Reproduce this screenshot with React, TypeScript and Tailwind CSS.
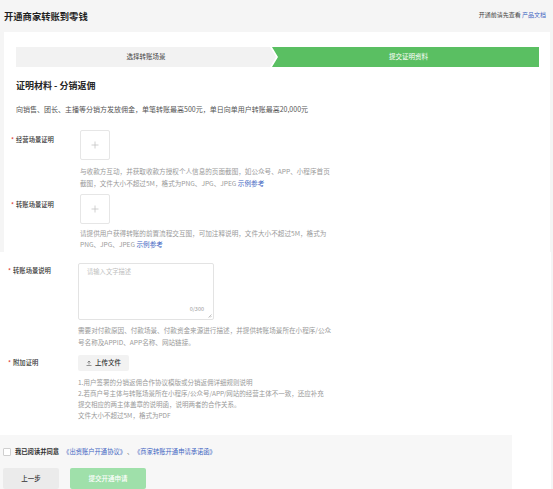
import React from 'react';

const font = { fontFamily: '"Noto Sans CJK SC", "Noto Sans", sans-serif' };

function Star() {
  return <span className="text-[#e0463c] mr-[2px]">*</span>;
}

function UploadBox() {
  return (
    <div className="w-[30px] h-[30px] border border-[#e6e6e6] rounded-[2px] bg-white flex items-center justify-center">
      <svg width="8" height="8" viewBox="0 0 8 8">
        <path d="M4 0.5v7M0.5 4h7" stroke="#c4c4c4" strokeWidth="0.8" />
      </svg>
    </div>
  );
}

function Link({ children }: { children: React.ReactNode }) {
  return <span className="text-[#3f66c2]">{children}</span>;
}

export default function App() {
  return (
    <div className="w-[553px] h-[489px] bg-[#f5f5f5] overflow-hidden text-[#333]" style={font}>
      {/* header */}
      <div className="h-[32px] flex items-center justify-between pl-[4px] pr-[7px]">
        <h1 className="text-[9.3px] leading-[12px] font-bold text-[#1f1f1f] -mt-[1px]">开通商家转账到零钱</h1>
        <div className="text-[6px] leading-[8px] text-[#444] -mt-[2px]">
          开通前请先查看 <Link>产品文档</Link>
        </div>
      </div>

      {/* top card */}
      <div className="ml-[4px] w-[546px] h-[220px] bg-white pt-[15px] pl-[12px]">
        <div className="flex h-[20px] w-[523px]">
          <div className="w-[260px] h-full bg-[#f2f2f2] flex items-center justify-center text-[6.5px] text-[#444] [clip-path:polygon(0_0,254px_0,260px_50%,254px_100%,0_100%)]">
            选择转账场景
          </div>
          <div className="-ml-[4px] flex-1 h-full bg-[#5abf62] flex items-center justify-center text-[6.5px] text-white pl-[6px] [clip-path:polygon(0_0,100%_0,100%_100%,0_100%,6px_50%)]">
            提交证明资料
          </div>
        </div>

        <h2 className="mt-[13px] text-[9px] leading-[12px] font-semibold text-[#262626]">证明材料 - 分销返佣</h2>
        <p className="mt-[12px] text-[7px] leading-[10px] text-[#555]">
          向销售、团长、主播等分销方发放佣金，单笔转账最高500元，单日向单用户转账最高20,000元
        </p>

        {/* row 1 */}
        <div className="flex mt-[16px] -ml-[5px]">
          <div className="w-[69px] pt-[6px] text-[6.3px] leading-[8px] font-medium text-[#333]">
            <Star />经营场景证明
          </div>
          <div>
            <UploadBox />
            <div className="mt-[5px] text-[6.6px] leading-[12px] text-[#9a9a9a] whitespace-nowrap">
              与收款方互动，并获取收款方授权个人信息的页面截图，如公众号、APP、小程序首页
              <br />
              截图，文件大小不超过5M，格式为PNG、JPG、JPEG <Link>示例参考</Link>
            </div>
          </div>
        </div>

        {/* row 2 */}
        <div className="flex mt-[5px] -ml-[5px]">
          <div className="w-[69px] pt-[7px] text-[6.3px] leading-[8px] font-medium text-[#333]">
            <Star />转账场景证明
          </div>
          <div>
            <UploadBox />
            <div className="mt-[4px] text-[6.6px] leading-[11px] text-[#9a9a9a] whitespace-nowrap">
              请提供用户获得转账的前置流程交互图，可加注释说明，文件大小不超过5M，格式为
              <br />
              PNG、JPG、JPEG <Link>示例参考</Link>
            </div>
          </div>
        </div>
      </div>

      {/* lower section */}
      <div className="w-[551px] h-[237px] bg-white">
        <div className="h-[183px] pl-[8px] pt-[11px]">
          {/* row 3 */}
          <div className="flex">
            <div className="w-[70px] pt-[4px] text-[6.3px] leading-[8px] font-medium text-[#333]">
              <Star />转账场景说明
            </div>
            <div>
              <div className="relative w-[136px] h-[57px] border border-[#e3e3e3] rounded-[2px] bg-white">
                <div className="absolute left-[8px] top-[4px] text-[6.3px] leading-[8px] text-[#c0c0c0]">请输入文字描述</div>
                <div className="absolute right-[9px] bottom-[6px] text-[5.5px] leading-[7px] text-[#9a9a9a]">0/300</div>
                <svg className="absolute right-[1px] bottom-[1px]" width="4" height="4" viewBox="0 0 4 4">
                  <path d="M0.5 3.5L3.5 0.5M2 3.5L3.5 2" stroke="#888" strokeWidth="0.5" />
                </svg>
              </div>
              <div className="mt-[4px] text-[6.6px] leading-[12px] text-[#9a9a9a] whitespace-nowrap">
                需要对付款原因、付款场景、付款资金来源进行描述，并提供转账场景所在小程序/公众
                <br />
                号名称及APPID、APP名称、网站链接。
              </div>
            </div>
          </div>

          {/* row 4 */}
          <div className="flex mt-[7px]">
            <div className="w-[70px] pt-[4px] text-[6.3px] leading-[8px] font-medium text-[#333]">
              <Star />附加证明
            </div>
            <div>
              <div className="w-[51px] h-[16px] bg-[#f2f2f2] rounded-[2px] flex items-center justify-center gap-[3px] text-[6.5px] font-medium text-[#333]">
                <svg width="6" height="6" viewBox="0 0 6 6">
                  <path d="M0.5 5.5h5M3 4.5V1M1.5 2.5L3 1l1.5 1.5" stroke="#555" strokeWidth="0.6" fill="none" />
                </svg>
                上传文件
              </div>
              <div className="mt-[6px] text-[6.5px] leading-[11px] text-[#9a9a9a] whitespace-nowrap">
                1.用户签署的分销返佣合作协议模版或分销返佣详细规则说明
                <br />
                2.若商户号主体与转账场景所在小程序/公众号/APP/网站的经营主体不一致，还应补充
                <br />
                提交相应的两主体盖章的说明函，说明两者的合作关系。
                <br />
                文件大小不超过5M，格式为PDF
              </div>
            </div>
          </div>
        </div>

        {/* bottom bar */}
        <div className="w-[512px] h-[54px] bg-[#f7f7f7] pl-[3px] pt-[12px]">
          <div className="flex items-center h-[9px] text-[6.3px] leading-[8px]">
            <div className="w-[8px] h-[8px] bg-white border border-[#cfcfcf] rounded-[1px]" />
            <span className="ml-[4px] font-semibold text-[#333]">我已阅读并同意</span>
            <span className="ml-[4px]">
              <Link>《出资账户开通协议》</Link>
              <span className="text-[#666] mx-[4px]">、</span>
              <Link>《商家转账开通申请承诺函》</Link>
            </span>
          </div>
          <div className="flex gap-[11px] mt-[12px]">
            <div className="w-[56px] h-[21px] bg-[#ebebeb] rounded-[2px] flex items-center justify-center text-[6.5px] text-[#333] font-medium">
              上一步
            </div>
            <div className="w-[76px] h-[21px] bg-[#9fe0aa] rounded-[2px] flex items-center justify-center text-[6.5px] text-white font-medium">
              提交开通申请
            </div>
          </div>
        </div>
      </div>
    </div>
  );
}
